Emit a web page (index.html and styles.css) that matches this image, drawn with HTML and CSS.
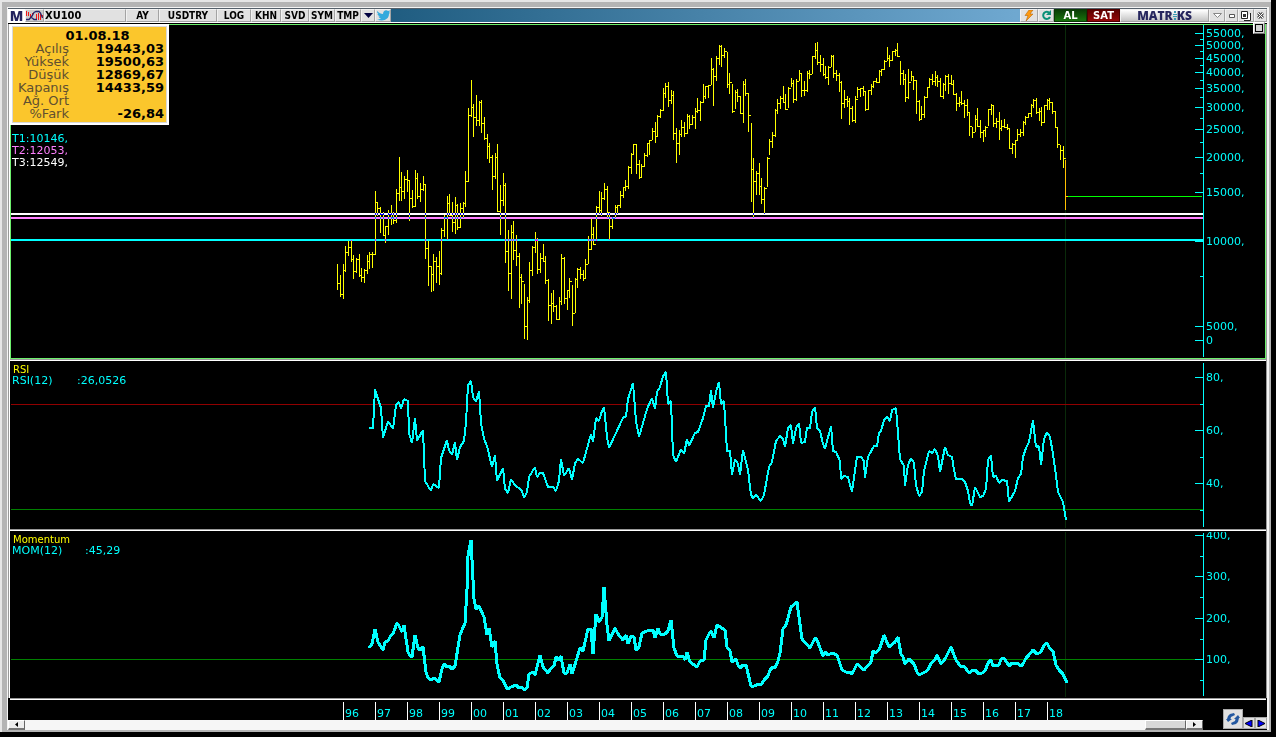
FILE: index.html
```html
<!DOCTYPE html>
<html lang="tr">
<head>
    <meta charset="UTF-8">
    <meta name="viewport" content="width=device-width, initial-scale=1.0">
    <title>XU100</title>
    <link rel="stylesheet" href="styles.css">
</head>
<body>
    <div class="window">
        <div class="client">
            <header class="toolbar">
                <button class="btn logo-m">M</button>
                <button class="btn wave" aria-label="Grafik">
                    <svg width="17" height="11" viewBox="0 0 17 11">
                        <path d="M.5 1v5M2.500 2v4M4.500 4v3M6.500 3v3M10.500 9V4M12.500 10V3M14.500 10V4M16.500 8V5" stroke="#f01818" fill="none"/>
                        <path d="M0 9.500H3L6 6L8 2.500L10 1.500H13L14.500 3L16.500 8M5 7L8 9.500H11" stroke="#26266a" stroke-width="1.300" fill="none"/>
                    </svg>
                </button>
                <input class="btn symbol" type="text" value="XU100" aria-label="Sembol">
                <button class="btn w-ay">AY</button>
                <button class="btn w-usd">USDTRY</button>
                <button class="btn w-log">LOG</button>
                <button class="btn w-khn">KHN</button>
                <button class="btn w-svd">SVD</button>
                <button class="btn w-sym">SYM</button>
                <button class="btn w-sym">TMP</button>
                <button class="btn w-arrow" aria-label="Menü">
                    <svg width="9" height="5" viewBox="0 0 9 5"><path d="M0 0h9L4.500 5z" fill="#000040"/></svg>
                </button>
                <button class="btn w-icon" aria-label="Twitter">
                    <svg width="13" height="11" viewBox="0 0 13 11"><path d="M0 1C2 3 4 4 6 4C6 1 9-1 11 1L13 .5L12 2.500L13 2.500L12 4C12 9 7 12 0 9.500C2 9.500 3 9 4 8.500C2.500 8 2 7.500 1.500 6.500H3C1 5.500 .6 5 .6 4L1.500 4C0 3 0 2 0 1z" fill="#33aadd"/></svg>
                </button>
                <span class="spacer"></span>
                <button class="btn w-bolt" aria-label="Hızlı emir">
                    <svg width="10" height="11" viewBox="0 0 10 11"><path d="M5 0L1 5.500h3L2 11L9 4H6L9 0z" fill="#ff9a10" stroke="#a85a00" stroke-width=".5"/></svg>
                </button>
                <button class="btn w-icon" aria-label="Yenile">
                    <svg width="11" height="11" viewBox="0 0 11 11"><path d="M8.500 3A3.600 3.600 0 1 0 9 7" fill="none" stroke="#0c9078" stroke-width="2"/><path d="M10 0v5H5z" fill="#0c9078"/></svg>
                </button>
                <button class="btn buy">AL</button>
                <button class="btn sell">SAT</button>
                <button class="btn brand"><span>MATR</span><svg width="4" height="9" viewBox="0 0 4 9"><path d="M1 0h2v2H1zM0 3h4v1H0zM0 5h4v1H0zM1 7h2v2H1z" fill="#3c9ab4"/></svg><span>KS</span></button>
                <button class="btn w-icon" aria-label="Aşağı">
                    <svg width="9" height="5" viewBox="0 0 9 5"><path d="M.5 .5h8L4.500 4.500z" fill="#fff" stroke="#888"/></svg>
                </button>
                <button class="btn w-min" aria-label="Küçült">
                    <svg width="6" height="4" viewBox="0 0 6 4"><path d="M.5 .5h5v3h-5z" fill="#fff" stroke="#555"/></svg>
                </button>
                <button class="btn w-icon" aria-label="Büyüt">
                    <svg width="10" height="10" viewBox="0 0 10 10"><path d="M.5 .5h6v7h-6zM3 9.500h6.500V2" fill="#fff" stroke="#222"/><path d="M2 3h3v3H2z" fill="#333"/></svg>
                </button>
                <button class="btn w-min" aria-label="Kapat">
                    <svg width="7" height="7" viewBox="0 0 7 7"><path d="M1 1l5 5M6 1L1 6" stroke="#555" stroke-width="3"/><path d="M1 1l5 5M6 1L1 6" stroke="#fff"/></svg>
                </button>
            </header>

            <main class="charts">
                <section class="panel price active">
                    <svg class="plot" viewBox="11 25 1192 333" preserveAspectRatio="none">
                        <path d="M1065.500 25V358" class="cursor"/>
                        <path d="M11 214H1203" stroke="#fff" stroke-width="2"/>
                        <path d="M11 218H1203" stroke="#ff80ff" stroke-width="2"/>
                        <path d="M11 240H1203" stroke="#0ff" stroke-width="2"/>
                        <path d="M1066 196.500H1202" stroke="#0f0"/>
                        <path id="bars" class="bars"/>
                        <path d="M1065.500 160V210M1066 196.500h2" stroke="#ffc000"/>
                    </svg>
                    <svg class="scale" id="priceScale" viewBox="1195 25 70 333"></svg>
                    <table class="info">
                        <caption>01.08.18</caption>
                        <tr><th>Açılış</th><td>19443,03</td></tr>
                        <tr><th>Yüksek</th><td>19500,63</td></tr>
                        <tr><th>Düşük</th><td>12869,67</td></tr>
                        <tr><th>Kapanış</th><td>14433,59</td></tr>
                        <tr><th>Ağ. Ort</th><td></td></tr>
                        <tr><th>%Fark</th><td>-26,84</td></tr>
                    </table>
                    <div class="levels">
                        <div class="t1">T1:10146,</div>
                        <div class="t2">T2:12053,</div>
                        <div class="t3">T3:12549,</div>
                    </div>
                    <button class="maximize" aria-label="Paneli büyüt"></button>
                </section>

                <section class="panel rsi">
                    <svg class="plot" viewBox="11 362 1192 166" preserveAspectRatio="none">
                        <path d="M1065.500 362V528" class="cursor"/>
                        <path d="M11 404.500H1203" stroke="#900000"/>
                        <path d="M11 509.500H1203" stroke="#008000"/>
                        <polyline class="line" stroke-width="2" points="369,428 373,428 375,389 378,399 381,408 383,438 388,421 393,429 396,405 399,402 401,409 404,399 408,401 409,433 412,443 415,418 417,441 423,430 425,481 431,491 433,484 439,488 441,458 447,440 449,450 452,455 455,442 457,460 460,447 464,441 466,422 468,385 471,381 473,397 476,402 479,391 481,423 484,439 487,446 492,467 495,455 497,481 503,468 505,489 508,493 511,479 514,484 522,491 524,498 527,492 529,477 535,467 537,477 540,473 543,473 548,487 553,487 556,491 559,481 561,459 564,476 569,468 572,480 575,463 578,459 583,463 591,434 593,442 596,418 599,421 602,411 604,407 607,437 609,448 615,435 623,418 626,416 628,399 633,383 636,421 639,437 647,409 652,398 655,409 657,392 660,387 663,376 666,372 668,404 671,401 673,455 676,462 681,449 684,454 687,439 689,446 695,433 698,432 703,418 706,406 709,406 711,390 713,408 716,392 719,382 721,404 724,401 727,451 730,451 732,475 735,459 738,464 740,475 743,450 748,470 751,495 753,498 756,495 761,501 764,495 769,467 772,462 776,441 780,436 783,439 785,447 788,428 791,425 793,444 796,428 799,423 801,443 805,442 807,428 810,428 812,412 815,407 817,428 820,431 823,444 825,449 831,426 833,451 836,452 840,461 841,479 844,476 848,477 852,492 857,457 861,457 864,461 865,478 868,457 874,446 877,446 879,433 881,431 884,420 887,417 890,421 892,410 896,408 900,459 904,466 905,486 908,465 911,458 914,463 916,485 919,496 922,492 924,471 929,451 932,453 935,449 938,456 940,472 945,447 948,455 952,457 954,470 956,479 962,479 965,482 968,491 970,503 972,506 975,487 980,497 983,496 986,489 988,460 991,455 993,477 996,476 999,483 1002,480 1007,481 1009,502 1015,491 1018,478 1021,474 1023,457 1026,448 1029,442 1033,420 1036,447 1039,446 1041,465 1044,439 1047,432 1050,437 1053,454 1056,476 1058,492 1063,502 1066,520"/>
                    </svg>
                    <svg class="scale" id="rsiScale" viewBox="1195 362 70 166"></svg>
                    <div class="legend">
                        <div class="name">RSI</div>
                        <div><span class="label">RSI(12)</span><span>:26,0526</span></div>
                    </div>
                </section>

                <section class="panel momentum">
                    <svg class="plot" viewBox="11 532 1192 165" preserveAspectRatio="none">
                        <path d="M1065.500 532V697" class="cursor"/>
                        <path d="M11 659.500H1203" stroke="#008000"/>
                        <polyline class="line" stroke-width="3" points="369,648 372,644 375,629 378,642 383,650 385,642 388,641 391,635 393,634 397,623 399,626 402,632 404,625 408,652 410,656 412,657 415,635 418,648 420,650 423,647 426,672 428,678 431,680 434,678 437,680 439,682 442,669 444,664 447,667 449,666 452,669 455,666 460,635 465,623 467,590 468,556 471,540 474,599 476,609 479,606 484,617 487,635 489,628 492,647 495,641 497,664 500,678 503,680 506,687 508,689 511,687 516,685 519,688 522,687 524,690 527,688 529,674 533,672 535,675 540,655 543,667 548,673 551,668 554,666 556,657 559,660 561,656 564,673 567,673 570,664 572,674 577,658 580,648 583,651 588,629 591,629 593,654 596,614 599,622 602,617 604,587 607,625 609,641 615,628 618,634 623,640 626,635 628,644 631,636 634,637 636,650 639,647 642,633 647,631 653,630 655,638 658,628 660,634 665,634 668,631 671,620 674,648 677,656 683,656 685,660 687,652 690,662 697,667 700,661 704,660 706,640 709,634 711,631 714,638 717,625 725,630 727,647 730,651 732,662 736,659 738,665 740,668 743,665 746,665 751,686 754,686 759,684 761,685 764,680 768,676 770,670 773,667 775,668 778,661 780,653 783,629 786,625 791,607 797,602 799,617 802,639 810,648 815,638 817,640 823,656 825,652 828,655 832,653 837,655 842,670 848,673 850,672 852,674 857,664 864,670 871,662 873,651 876,653 880,648 884,635 889,647 895,642 898,637 901,654 903,657 905,664 909,659 914,664 917,672 919,675 927,671 932,662 935,660 937,655 941,664 945,659 951,647 956,660 961,667 964,666 969,673 973,670 975,670 979,674 982,673 985,671 988,663 991,660 993,666 999,665 1001,659 1004,658 1009,666 1012,663 1017,663 1021,666 1023,664 1026,658 1028,656 1033,650 1037,654 1041,652 1044,645 1047,643 1050,649 1053,651 1056,665 1059,670 1063,674 1067,683"/>
                    </svg>
                    <svg class="scale" id="momScale" viewBox="1195 532 70 165"></svg>
                    <div class="legend">
                        <div class="name">Momentum</div>
                        <div><span class="label wide">MOM(12)</span><span>:45,29</span></div>
                    </div>
                </section>
            </main>

            <footer class="footer">
                <div class="timeline">
                    <div class="years" id="years"></div>
                    <div class="scrollbar">
                        <button class="scroll-btn" aria-label="Sola kaydır"><svg width="3" height="5" viewBox="0 0 3 5"><path d="M3 0v5L0 2.500z"/></svg></button>
                        <div class="track"></div>
                        <div class="thumb"></div>
                        <button class="scroll-btn" aria-label="Sağa kaydır"><svg width="3" height="5" viewBox="0 0 3 5"><path d="M0 0v5l3-2.500z"/></svg></button>
                    </div>
                </div>
                <div class="nav">
                    <button class="nav-btn reload" aria-label="Güncelle">
                        <svg width="14" height="14" viewBox="0 0 14 14"><path d="M8 1L4 2L2 4L1 7H0L2 10L6 7H4.500L5 5L9 3zM6 13L10 12L12 10L13 6L14 6L12 3L8 7H9.500L9 9L5 11z" fill="#2458a0"/></svg>
                    </button>
                    <button class="nav-btn" aria-label="Önceki"><svg width="8" height="7" viewBox="0 0 8 7"><path d="M7 0v7L0 3.500z" fill="#00f" stroke="#000"/></svg></button>
                    <button class="nav-btn" aria-label="Sonraki"><svg width="8" height="7" viewBox="0 0 8 7"><path d="M1 0v7l7-3.500z" fill="#00f" stroke="#000"/></svg></button>
                </div>
            </footer>
        </div>
    </div>
    <script src="script.js"></script>
</body>
</html>
```
FILE: styles.css
```css
* { margin: 0; padding: 0; box-sizing: border-box; }
body { background: #000; font-family: "DejaVu Sans", Verdana, sans-serif; font-size: 11px; }
button, input { font: inherit; }
svg { display: block; flex: none; }

.window { margin-right: 5px; padding: 5px 2px 2px 5px; background: #b4b4b4; border-top: 2px solid #e6e6e6; border-left: 2px solid #e6e6e6; }
.client { background: #000; border: 1px solid #f4f4f4; border-width: 1px 2px 0 1px; }

/* toolbar */
.toolbar { display: flex; height: 15px; border-top: 1px solid #55606a; border-bottom: 1px solid #fff; background: linear-gradient(90deg, #1d4f70 0%, #1f5c80 30%, #6fa8d0 80%); }
.btn { display: flex; align-items: center; justify-content: center; flex: none; height: 13px; background: #e1e1e1; border: 1px solid #a4a4a4; border-top-color: #f2f2f2; border-left-color: #f2f2f2; color: #000; font-family: "DejaVu Sans Condensed", "DejaVu Sans", sans-serif; font-size: 10px; font-weight: bold; line-height: 11px; }
.logo-m { width: 17px; background: #fff; border-color: #fff; color: #22225e; font-family: "Open Sans", sans-serif; font-size: 14px; font-weight: 800; }
.wave { width: 19px; background: #ccc; }
.symbol { width: 82px; font-size: 11px; }
.w-ay { width: 33px; }
.w-usd { width: 58px; }
.w-log { width: 34px; }
.w-khn { width: 30px; }
.w-svd { width: 28px; }
.w-sym { width: 26px; }
.w-arrow { width: 14px; }
.w-icon { width: 16px; }
.w-bolt { width: 18px; }
.w-min { width: 13px; }
.spacer { flex: 1; }
.buy, .sell { color: #fff; font-family: "DejaVu Sans", sans-serif; }
.buy { width: 33px; background: linear-gradient(#0a3c06, #18740c); border-color: #0a3a06; }
.sell { width: 33px; background: linear-gradient(#5c0000, #940808); border-color: #4c0000; }
.brand { width: 89px; background: linear-gradient(#fff, #c4c4c4); color: #26265e; font-family: "Open Sans", sans-serif; font-size: 12px; font-weight: 800; }

/* panels */
.charts { margin-top: 1px; padding-left: 1px; background: #fff; border-left: 1px solid #999; border-right: 1px solid #999; }
.panel { position: relative; display: flex; background: #000; border: 1px solid #000; }
.panel.active { border-color: #6df06d; }
.price { height: 335px; }
.rsi { height: 168px; margin-top: 2px; box-shadow: 0 -1px 0 #fff, 0 -2px 0 #999; }
.momentum { height: 167px; margin-top: 2px; margin-bottom: 2px; box-shadow: 0 -1px 0 #fff, 0 -2px 0 #999, 0 1px 0 #999, 0 2px 0 #fff; }
.plot { flex: 1; min-width: 0; height: 100%; shape-rendering: crispEdges; }
.scale { width: 70px; height: 100%; margin-left: -8px; shape-rendering: crispEdges; }
.scale path { stroke: #0ff; }
.scale text { fill: #0ff; font-size: 11px; }
.cursor { stroke: #0a2a0a; }
.bars { stroke: #ff0; mix-blend-mode: difference; }
.line { fill: none; stroke: #0ff; stroke-linejoin: bevel; }

.info { position: absolute; left: -1px; top: -1px; display: block; width: 159px; height: 101px; padding: 3px 3px 0 1px; background: #fbc62c; border: 2px solid #fff; outline: 1px solid #d8d8d8; outline-offset: -3px; border-spacing: 0; font-size: 13px; line-height: 13px; }
.info caption { display: block; padding-left: 18px; font-weight: bold; }
.info tbody { display: block; }
.info tr { display: flex; height: 13px; }
.info th { width: 56px; color: #604f30; font-weight: normal; text-align: right; white-space: nowrap; }
.info td { flex: 1; font-weight: bold; text-align: right; }

.levels { position: absolute; left: 1px; top: 108px; line-height: 12px; }
.t1 { color: #0ff; }
.t2 { color: #ff80ff; }
.t3 { color: #fff; }
.maximize { position: absolute; right: 0; top: -3px; width: 12px; height: 12px; background: #d4d4d4; border: 1px solid #fff; border-right-color: #777; border-bottom-color: #777; }
.maximize::before { content: ""; display: block; width: 6px; height: 6px; margin: 0 auto; border: 1px solid #000; }

.legend { position: absolute; left: 1px; top: 2px; color: #0ff; line-height: 11px; }
.legend .name { padding-left: 1px; color: #ff0; font-size: 10px; }
.legend .label { display: inline-block; width: 65px; }
.legend .wide { width: 73px; }

/* time axis and scrollbar */
.footer { display: flex; }
.timeline { flex: 1; min-width: 0; }
.years { display: grid; grid-template-columns: minmax(0, 332fr) repeat(22, minmax(0, 32fr)) minmax(0, 156fr); height: 20px; padding: 2px 0 0 3px; }
.years span { padding: 5px 0 0 1px; border-left: 1px solid #fff; color: #0ff; line-height: 13px; }
.years .before { border: 0; }
.scrollbar { display: flex; height: 10px; background: #f6f6f6; }
.track { flex: 1; }
.thumb { width: 41px; background: #d8d8d8; border: 1px solid #fff; border-right-color: #666; border-bottom: 2px solid #777; }
.scroll-btn { display: flex; align-items: center; justify-content: center; width: 17px; background: #eee; border: 1px solid #fff; border-right-color: #666; border-bottom: 2px solid #777; }
.nav { display: flex; flex: none; align-items: flex-end; justify-content: flex-end; width: 64px; padding-bottom: 1px; }
.nav-btn { display: flex; align-items: center; justify-content: center; width: 12px; height: 12px; background: #e1e1e1; border: 1px solid #aaa; }
.reload { width: 20px; height: 20px; }
```
FILE: script.js
```js
// monthly bars, "high,low,close" in chart units, Nov 1995 - Aug 2018
const bars = `
264,290,283 275,297,294 264,299,270 246,272,252 241,256,247 240,262,259 255,279,271 258,273,259
254,277,275 268,282,277 269,283,270 255,274,261 252,269,254 252,268,254 191,255,202 203,216,208
207,233,214 212,236,235 226,243,226 210,235,214 205,225,217 212,224,220 189,223,193 157,201,187
172,201,191 176,199,179 170,192,180 180,221,198 190,208,206 170,207,178 173,199,196 183,202,189
176,191,184 184,259,248 241,286,266 266,292,274 254,291,261 257,283,266 251,285,273 228,275,230
215,237,217 196,240,203 194,216,215 202,232,222 197,234,205 204,230,227 203,228,208 202,218,203
171,207,181 108,182,115 80,117,107 104,137,117 95,126,120 101,126,102 100,133,123 117,140,138
134,159,146 143,163,157 155,190,176 153,179,157 144,212,211 185,235,200 173,206,185 183,263,251
230,291,273 225,299,232 221,260,250 235,266,256 253,308,277 274,304,281 284,339,326 297,340,300
262,303,270 246,276,247 232,253,240 238,274,269 253,273,258 244,262,261 256,284,280 279,321,305
293,324,303 290,312,306 305,320,319 297,320,301 254,305,258 257,304,298 290,310,290 278,298,281
285,326,313 278,313,279 268,288,269 267,279,274 270,281,278 259,279,264 236,264,249 219,250,234
227,245,244 206,241,207 191,214,210 192,216,198 183,200,189 186,218,212 212,240,226 217,229,218
205,218,207 205,214,205 191,208,195 187,198,187 180,191,186 166,189,167 153,174,154 144,155,144
144,174,164 160,179,177 164,178,166 153,167,155 143,157,143 140,155,140 128,140,131 122,143,136
115,137,116 109,118,110 88,111,93 83,98,86 82,107,100 90,104,95 91,140,133 128,163,143
130,155,134 120,137,127 122,137,133 114,134,116 115,129,124 115,125,117 108,129,111 98,113,110
101,121,102 84,103,96 86,99,86 85,98,85 58,85,69 68,106,76 56,81,58 45,65,46
45,67,55 48,58,51 52,88,84 73,94,82 84,113,111 90,109,92 89,102,96 96,113,113
81,123,84 79,96,93 93,132,115 123,202,169 158,218,181 171,195,173 163,195,186 178,204,199
187,214,188 157,187,158 139,155,141 132,148,135 109,137,110 99,114,103 96,109,98 86,103,102
94,110,109 87,108,88 78,87,83 80,103,99 79,101,81 70,81,73 74,97,90 81,96,90
71,92,73 70,79,74 56,74,56 43,59,50 42,65,62 55,72,64 58,76,74 66,79,77
66,85,67 55,67,56 55,78,73 70,81,75 73,92,82 81,119,103 90,108,99 96,107,101
98,125,108 106,122,120 96,123,99 87,98,89 88,97,88 86,96,91 91,111,109 90,110,90
84,95,86 81,88,81 78,83,82 70,83,71 69,76,69 60,70,61 47,61,58 55,67,60
51,61,51 49,56,50 43,57,56 61,85,73 70,85,79 74,102,97 69,99,82 71,81,76
76,90,80 80,114,101 100,121,119 106,120,114 96,118,97 87,98,87 78,88,79 74,85,81
71,86,77 75,87,81 78,97,96 83,99,84 75,91,76 74,94,83 75,85,84 80,95,94
93,111,103 97,107,102 91,105,103 100,118,105 99,116,112 112,136,126 127,138,132 115,132,119
108,127,126 120,138,132 130,142,130 126,137,127 109,126,109 104,115,105 106,127,123 118,128,121
112,140,128 120,131,126 119,128,127 124,130,128 128,148,148 143,154,144 140,158,140 129,141,134
129,137,132 121,136,122 116,125,117 113,118,113 104,117,105 99,108,100 98,114,112 108,121,111
107,126,122 105,123,105 99,110,100 98,110,102 102,114,111 111,127,127 128,148,144 145,160,150
146,168,158`.trim().split(/\s+/);

let d = "";
bars.forEach((bar, i) => {
    const [high, low, close] = bar.split(",").map(Number);
    const x = 337 + Math.ceil(i * 8 / 3);
    d += `M${x + 0.5} ${high}V${low}M${x} ${close + 0.5}h3`;
});
document.getElementById("bars").setAttribute("d", d);

function drawScale(id, top, bottom, labels, minors) {
    let ticks = `M1203.5 ${top}V${bottom}`;
    let texts = "";
    for (const [text, y] of labels) {
        ticks += `M1195 ${y + 0.5}h8`;
        texts += `<text x="1206" y="${y + 4}">${text}</text>`;
    }
    for (const y of minors) ticks += `M1200 ${y + 0.5}h3`;
    document.getElementById(id).innerHTML = `<path d="${ticks}"/>${texts}`;
}

drawScale("priceScale", 25, 357, [
    ["55000,", 33], ["50000,", 45], ["45000,", 58], ["40000,", 72], ["35000,", 88], ["30000,", 107],
    ["25000,", 129], ["20000,", 157], ["15000,", 192], ["10000,", 241], ["5000,", 326], ["0", 340]
], [39, 51, 65, 80, 97, 118, 142, 173, 276]);
drawScale("rsiScale", 363, 527, [["80,", 377], ["60,", 430], ["40,", 483]], [404, 457, 510]);
drawScale("momScale", 533, 696, [["400,", 535], ["300,", 576], ["200,", 618], ["100,", 659]], [556, 597, 639, 680]);

let years = '<span class="before"></span>';
for (let y = 1996; y <= 2018; y++) years += `<span>${String(y).slice(2)}</span>`;
document.getElementById("years").innerHTML = years;
```
